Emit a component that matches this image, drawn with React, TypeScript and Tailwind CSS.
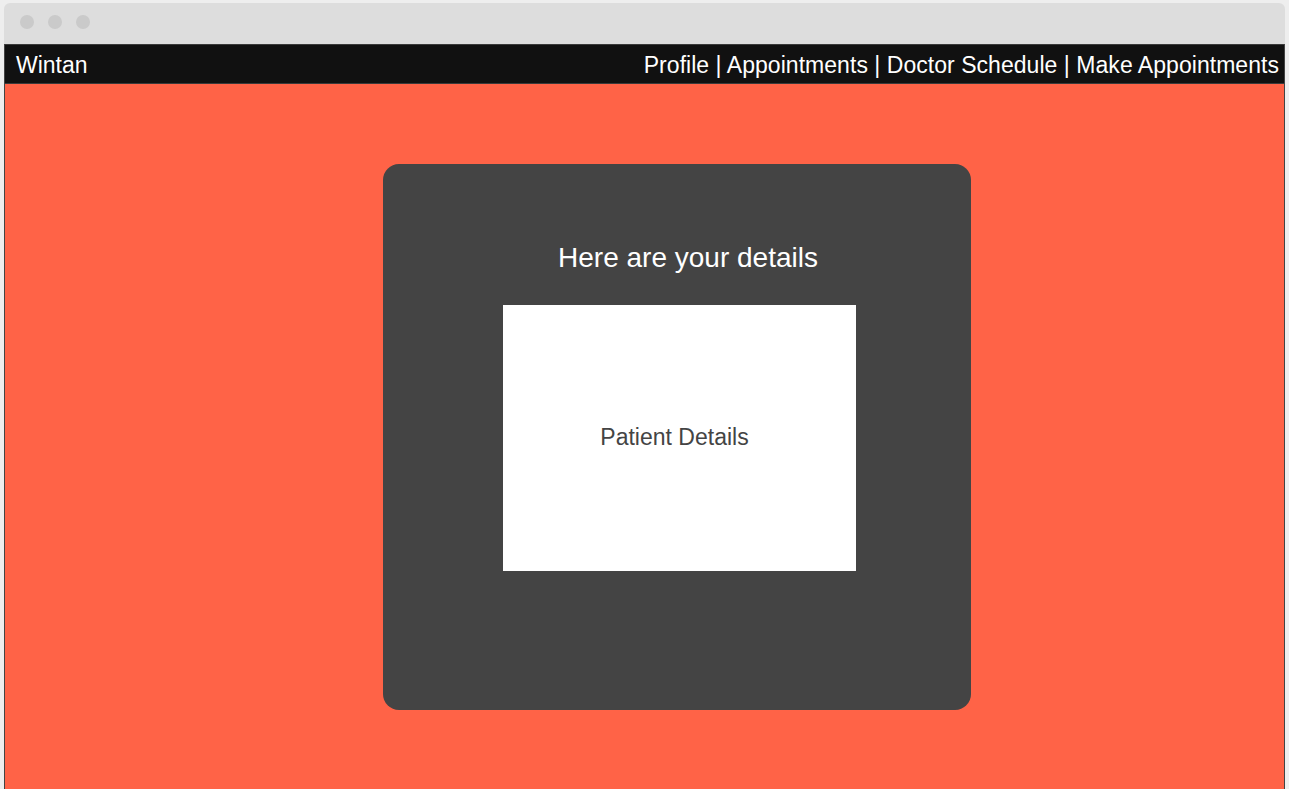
export default function App() {
  const links = ['Profile', 'Appointments', 'Doctor Schedule', 'Make Appointments']

  return (
    <div className="h-screen overflow-hidden bg-[#eeeeee] pt-[3px] pl-[4px] font-['Liberation_Sans',Arial,sans-serif]">
      <div className="flex h-full w-[1281px] flex-col overflow-hidden rounded-t-[6px] bg-[#dddddd]">
        {/* Window title bar */}
        <div className="flex h-[41px] shrink-0 gap-[14px] pl-[16px] pt-[12px]">
          <span className="h-[14px] w-[14px] rounded-full bg-[#cacaca]" />
          <span className="h-[14px] w-[14px] rounded-full bg-[#cacaca]" />
          <span className="h-[14px] w-[14px] rounded-full bg-[#cacaca]" />
        </div>

        <div className="flex flex-1 flex-col border-x border-[#444444] bg-[#ff6347]">
          {/* Nav */}
          <nav className="flex h-[40px] shrink-0 items-center justify-between border-y border-[#3a3a3a] bg-[#111111] pl-[11px] pr-[5px] pt-[3px] text-[23px] text-white">
            <span>Wintan</span>
            <span className="tracking-[0.04px]">{links.join(' | ')}</span>
          </nav>

          {/* Details card */}
          <div className="ml-[378px] mt-[80px] h-[546px] w-[588px] rounded-[16px] bg-[#444444] pt-[78px]">
            <h1 className="ml-[22px] text-center text-[28px] leading-[32px] text-white">Here are your details</h1>
            <div className="ml-[120px] mt-[31px] flex h-[266px] w-[353px] items-center justify-center bg-white pb-[2px] pr-[10px] text-[23px] text-[#444444]">
              Patient Details
            </div>
          </div>
        </div>
      </div>
    </div>
  )
}
